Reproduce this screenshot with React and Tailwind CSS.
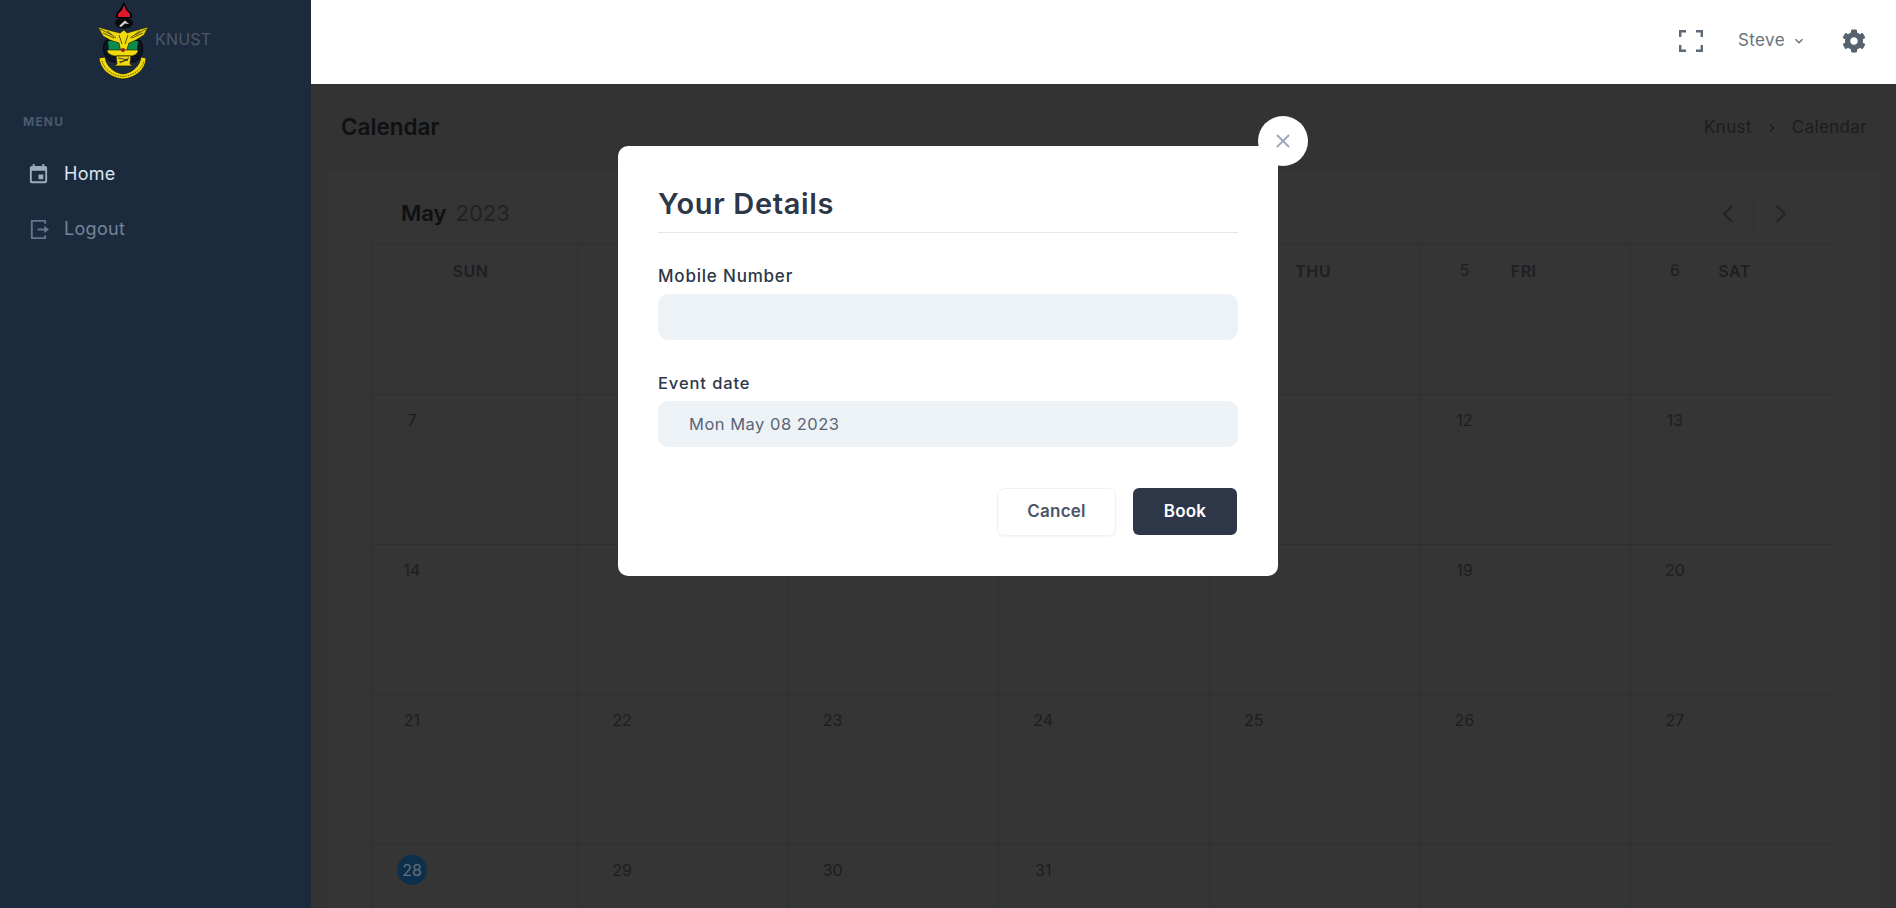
import React from "react";
import { MdEvent, MdKeyboardArrowDown, MdChevronRight } from "react-icons/md";
import { RiLogoutBoxRLine } from "react-icons/ri";
import { FaCog } from "react-icons/fa";
import { FiX, FiChevronLeft, FiChevronRight } from "react-icons/fi";

const font = "font-['Inter','Noto_Sans',sans-serif]";

function Crest() {
  return (
    <svg viewBox="96 0 54 82" className="w-[54px] h-[82px] shrink-0">
      <path d="M124 2 L127 9 L132 14 L132 18 L116 18 L116 14 L120 9 Z" fill="#000" />
      <path d="M124 5 L126 10 L130 14 L130 17 L118 17 L118 14 L122 10 Z" fill="#e3162e" />
      <ellipse cx="124" cy="23" rx="9" ry="5.5" fill="#0a0a0a" />
      <path d="M119 26 L125 20.5 L129 24 L125 23.5 L121 27 Z" fill="#d8d8d8" />
      <path d="M106 40 C101 46 103 58 112 62 L135 62 C143 58 145 46 140 40 Z" fill="#0b1420" stroke="#05080c" strokeWidth="1" />
      <path d="M108 41 L138 41 L137 51 L109 51 Z" fill="#0d8a4e" />
      <path d="M98 27 L112 31 L120 33 L124 30 L127 33 L134 31 L148 27 L144 35 L136 40 L129 43 L126 52 L121 52 L119 43 L110 40 L103 36 Z" fill="#f0d90c" stroke="#1a1a00" strokeWidth="0.6" />
      <path d="M100 29 L112 35 M103 33 L114 38 M146 29 L135 35 M143 33 L132 38 M119 35 L122 44 M128 35 L125 44 M107 31 L116 38 M140 31 L130 38" stroke="#3b3500" strokeWidth="0.8" fill="none" />
      <path d="M107 50 L138 50 C138 54 134 56 130 56 L117 56 C112 56 107 54 107 50 Z" fill="#f0d90c" stroke="#151500" strokeWidth="0.6" />
      <circle cx="123" cy="50" r="2" fill="#8f1e1e" />
      <path d="M116 56 L131 56 L130 64 L133 66 L114 66 L117 64 Z" fill="#f0d90c" stroke="#151500" strokeWidth="0.7" />
      <path d="M118 58 L128 60 L119 62 M120 63 L129 58" stroke="#222" strokeWidth="0.8" fill="none" />
      <path d="M99 58 L105 57 C106 66 114 73 123 74 C132 73 140 66 141 57 L146 58 C146 69 136 78 123 79 C110 78 100 69 99 58 Z" fill="#f0d90c" stroke="#111" strokeWidth="0.7" />
      <path d="M102 61 C104 69 112 75.5 123 76.5 C134 75.5 142 69 144 61" stroke="#3b3500" strokeWidth="0.8" strokeDasharray="1.5 1" fill="none" />
    </svg>
  );
}

function FullscreenIcon() {
  return (
    <svg viewBox="0 0 24 22" className="w-6 h-[22px]" fill="none" stroke="#5d6a75" strokeWidth="2.4">
      <path d="M1.2 7V1.2H7M17 1.2H22.8V7M22.8 15V20.8H17M7 20.8H1.2V15" />
    </svg>
  );
}

function NavItem({ icon, label, active }) {
  return (
    <div className={`flex items-center h-[46px] pl-[27px] ${active ? "text-[#dbe5ef]" : "text-[#75849a]"}`}>
      <span className={`w-[37px] text-[23px] ${active ? "text-[#9dabba]" : "text-[#66768a]"}`}>{icon}</span>
      <span className="text-[18px] leading-none tracking-[0.3px]">{label}</span>
    </div>
  );
}

function Cell({ n, name, col, today }) {
  const first = col === 0;
  const pad = col === 0 ? "pr-[63px]" : col === 6 ? "pr-[57px]" : "pr-[62px]";
  return (
    <div className={`h-[149px] pt-[10px] border-l border-[#2d2e2e] ${first ? "pl-[25px]" : "pl-[29px]"}`}>
      <div className="flex items-start">
        <span
          className={`w-[30px] h-[30px] rounded-full shrink-0 flex items-center justify-center text-[16px] ${
            today ? "bg-[#0d2f4c] text-[#5f6f7c]" : "text-[#1c1e22]"
          }`}
        >
          {n}
        </span>
        {name && (
          <span className={`flex-1 text-center text-[16px] leading-[32px] font-semibold tracking-[0.5px] text-[#1d1f25] ${pad}`}>
            {name}
          </span>
        )}
      </div>
    </div>
  );
}

const rows = [
  [["", "SUN"], [""], [""], [""], ["", "THU"], ["5", "FRI"], ["6", "SAT"]],
  [["7"], [""], [""], [""], [""], ["12"], ["13"]],
  [["14"], [""], [""], [""], [""], ["19"], ["20"]],
  [["21"], ["22"], ["23"], ["24"], ["25"], ["26"], ["27"]],
  [["28"], ["29"], ["30"], ["31"], [""], [""], [""]],
];

export default function App() {
  return (
    <div className={`${font} flex h-screen w-full overflow-hidden bg-[#333333]`}>
      <aside className="w-[311px] shrink-0 bg-[#1b2b3d]">
        <div className="h-[84px] border-b border-[#1a2a3c] flex items-start pl-[96px] overflow-hidden">
          <Crest />
          <span className="ml-[5px] mt-[31px] text-[16px] leading-4 tracking-[0.2px] text-[#4c5868]">KNUST</span>
        </div>
        <div className="pl-[23px] pt-[31px] pb-[22px] text-[12px] leading-[14px] font-bold tracking-[1.2px] text-[#4b5a6e]">MENU</div>
        <NavItem active label="Home" icon={<MdEvent />} />
        <div className="h-[9px]" />
        <NavItem label="Logout" icon={<RiLogoutBoxRLine />} />
      </aside>

      <main className="flex-1 min-w-0 flex flex-col">
        <header className="h-[84px] shrink-0 bg-white flex items-center justify-end pr-[30px] pb-[3px]">
          <FullscreenIcon />
          <div className="ml-[35px] flex items-center text-[#66727d]">
            <span className="text-[17px] tracking-[0.4px]">Steve</span>
            <MdKeyboardArrowDown className="ml-[6px] text-[16px]" />
          </div>
          <FaCog className="ml-[35px] text-[24px] text-[#56636e]" />
        </header>

        <div className="flex-1 min-h-0 bg-[#333333]">
          <div className="h-[86px] flex items-center justify-between pl-[30px] pr-[29px]">
            <h1 className="text-[22.5px] font-semibold text-[#0f1012]">Calendar</h1>
            <div className="flex items-center text-[17px] tracking-[0.35px] text-[#1b1d21] pt-[1px]">
              <span>Knust</span>
              <MdChevronRight className="mx-[12px] text-[16px]" />
              <span>Calendar</span>
            </div>
          </div>

          <section className="mx-[16px] bg-[#343534] px-[44px] h-[760px]">
            <div className="h-[75px] pt-[13px] pl-[30px] pr-[29px] flex items-center justify-between border-b border-[#2d2e2e]">
              <div className="text-[22px] flex items-baseline gap-[9px]">
                <span className="font-semibold text-[#0f1012]">May</span>
                <span className="text-[#202227]">2023</span>
              </div>
              <div className="w-[105px] h-[46px] border border-[#323333] rounded-[10px] flex items-center text-[#23252a]">
                <span className="flex-1 flex justify-center border-r border-[#2d2e2e] h-[30px] items-center"><FiChevronLeft className="text-[30px]" strokeWidth={1.7} /></span>
                <span className="flex-1 flex justify-center h-[30px] items-center pl-[3px]"><FiChevronRight className="text-[30px]" strokeWidth={1.7} /></span>
              </div>
            </div>
            {rows.map((row, i) => (
              <div key={i} className="grid grid-cols-[206fr_repeat(5,210.5fr)_206fr] border-b border-[#2d2e2e]">
                {row.map(([n, name], j) => (
                  <Cell key={j} n={n} name={name} col={j} today={n === "28"} />
                ))}
              </div>
            ))}
          </section>
        </div>
      </main>

      <div className="fixed left-[618px] top-[146px] w-[660px] h-[430px] bg-white rounded-[10px] px-[40px] pt-[38px] text-[#2d3748]">
        <button className="absolute -right-[30px] -top-[30px] w-[50px] h-[50px] rounded-full bg-white flex items-center justify-center text-[#9aa8bb]">
          <FiX className="text-[22px]" />
        </button>
        <h2 className="text-[29px] leading-[40px] font-semibold tracking-[0.65px] border-b border-[#e2e8f0] h-[49px]">Your Details</h2>
        <label className="block mt-[33px] text-[17px] leading-[20px] font-medium tracking-[0.8px]">Mobile Number</label>
        <div className="mt-[8px] h-[46px] rounded-[10px] bg-[#edf2f7]" />
        <label className="block mt-[33px] text-[16.5px] leading-[20px] font-medium tracking-[0.9px]">Event date</label>
        <div className="mt-[8px] h-[46px] rounded-[10px] bg-[#edf2f7] flex items-center pl-[31px] text-[16.5px] tracking-[0.5px] text-[#596477]">Mon May 08 2023</div>
        <div className="mt-[41px] flex justify-end gap-[17px] pr-[1px]">
          <button className="w-[119px] h-[48px] rounded-[8px] border border-[#edf2f7] shadow-[0_1px_2px_rgba(0,0,0,0.05)] text-[17px] tracking-[0.2px] font-semibold text-[#4a5568]">Cancel</button>
          <button className="w-[104px] h-[47px] rounded-[6px] bg-[#2d3748] text-[17px] tracking-[0.2px] font-semibold text-white">Book</button>
        </div>
      </div>
    </div>
  );
}
